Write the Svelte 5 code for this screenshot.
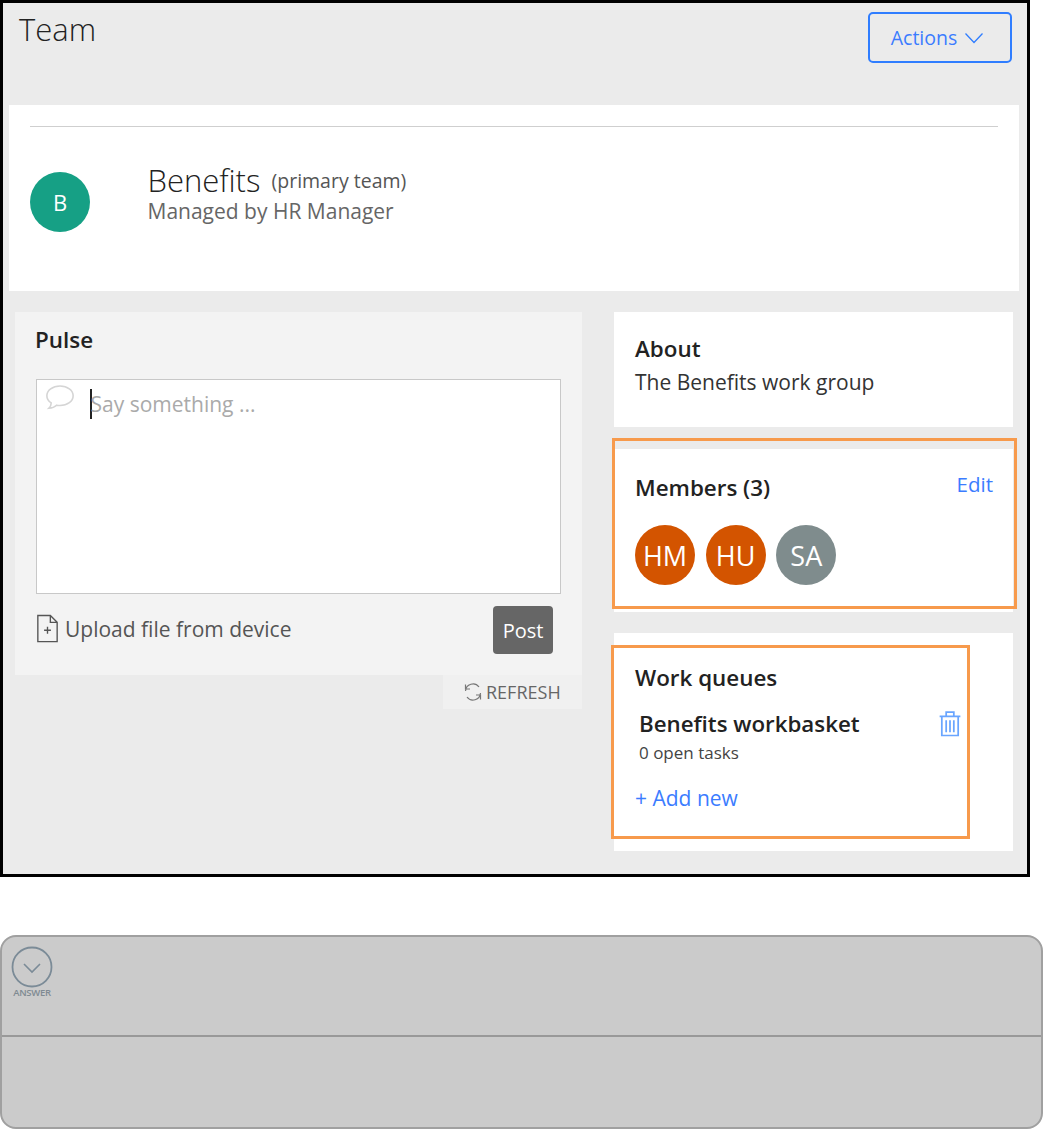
<script lang="ts">
    const members = [
        { initials: 'HM', color: '#d35400' },
        { initials: 'HU', color: '#d35400' },
        { initials: 'SA', color: '#7f8c8d' }
    ];
</script>

<div class="frame">
    <header class="top">
        <h1>Team</h1>
        <button class="actions">
            Actions
            <svg width="20" height="12" viewBox="0 0 20 12"><path d="M1.5 1.5 L10 10.5 L18.5 1.5" fill="none" stroke="#2f7dff" stroke-width="1.3" /></svg>
        </button>
    </header>

    <section class="team-card">
        <hr />
        <div class="team-row">
            <div class="avatar-b">B</div>
            <div class="team-text">
                <div class="team-name">Benefits <span>(primary team)</span></div>
                <div class="managed">Managed by HR Manager</div>
            </div>
        </div>
    </section>

    <div class="columns">
        <div class="left">
            <section class="pulse">
                <h2>Pulse</h2>
                <div class="input">
                    <svg class="bubble" width="32" height="30" viewBox="0 0 28 26">
                        <path d="M14 2.5 C7.5 2.5 2.5 6.2 2.5 11 C2.5 13.6 4 15.8 6.3 17.3 C6.3 19.2 5.4 20.8 4.2 22 C7 21.8 9.4 20.9 11 19.3 C12 19.5 13 19.6 14 19.6 C20.5 19.6 25.5 15.8 25.5 11 C25.5 6.2 20.5 2.5 14 2.5 Z" fill="none" stroke="#d5d5d5" stroke-width="1.4" />
                    </svg>
                    <span class="caret"></span>
                    <span class="placeholder">Say something ...</span>
                </div>
                <div class="pulse-foot">
                    <div class="upload">
                        <svg width="25" height="32" viewBox="0 0 22 28">
                            <path d="M2.5 3 H13.5 L19.5 9 V26 H2.5 Z M13.5 3 V9 H19.5" fill="none" stroke="#555" stroke-width="1.2" />
                            <path d="M8 16 H14 M11 13 V19" fill="none" stroke="#555" stroke-width="1.2" />
                        </svg>
                        <span>Upload file from device</span>
                    </div>
                    <button class="post">Post</button>
                </div>
            </section>
            <div class="refresh">
                <svg width="20" height="20" viewBox="0 0 20 20">
                    <path d="M2.5 9 A7.5 7.5 0 0 1 16 5 M17.5 11 A7.5 7.5 0 0 1 4 15" fill="none" stroke="#777" stroke-width="1.2" />
                    <path d="M2.5 2.5 V7 H7 M17.5 17.5 V13 H13" fill="none" stroke="#777" stroke-width="1.2" />
                </svg>
                <span>REFRESH</span>
            </div>
        </div>

        <div class="right">
            <section class="about">
                <h2>About</h2>
                <p>The Benefits work group</p>
            </section>

            <section class="members">
                <div class="members-head">
                    <h2>Members (3)</h2>
                    <span class="link">Edit</span>
                </div>
                <div class="member-list">
                    {#each members as m}
                        <div class="member" style="background: {m.color}">{m.initials}</div>
                    {/each}
                </div>
                <div class="mark mark-members"></div>
            </section>

            <section class="queues">
                <h2>Work queues</h2>
                <div class="queue">
                    <div>
                        <div class="queue-name">Benefits workbasket</div>
                        <div class="queue-sub">0 open tasks</div>
                    </div>
                    <svg class="trash" width="24" height="29" viewBox="0 0 22 26">
                        <path d="M1.5 6.5 H20.5 M7.5 6 V2.5 H14.5 V6 M3.5 6.5 V24 H18.5 V6.5 M7.5 10 V21 M11 10 V21 M14.5 10 V21" fill="none" stroke="#69a5ff" stroke-width="1.6" />
                    </svg>
                </div>
                <span class="link add">+ Add new</span>
                <div class="mark mark-queues"></div>
            </section>
        </div>
    </div>
</div>

<div class="answer">
    <div class="answer-top">
        <div class="toggle">
            <svg width="42" height="42" viewBox="0 0 42 42">
                <circle cx="21" cy="21" r="19.5" fill="none" stroke="#7b8b97" stroke-width="1.8" />
                <path d="M13 18 L21 26 L29 18" fill="none" stroke="#7b8b97" stroke-width="1.6" />
            </svg>
            <span>ANSWER</span>
        </div>
    </div>
    <div class="answer-bottom"></div>
</div>

<style>
    :global(body) {
        margin: 0;
        background: #fff;
        font-family: "Open Sans", sans-serif;
        color: #333;
    }

    h1, h2, p {
        margin: 0;
    }

    button {
        font-family: inherit;
        cursor: pointer;
    }

    .frame {
        box-sizing: border-box;
        width: 1030px;
        height: 877px;
        border: 3px solid #000;
        background: #ebebeb;
    }

    .top {
        display: flex;
        justify-content: space-between;
        align-items: flex-start;
        height: 102px;
        padding: 8px 15px 0 16px;
        box-sizing: border-box;
    }

    h1 {
        font-size: 31px;
        font-weight: 300;
        line-height: 36px;
        color: #222;
    }

    .actions {
        display: flex;
        align-items: center;
        justify-content: center;
        gap: 7px;
        box-sizing: border-box;
        width: 144px;
        height: 51px;
        margin-top: 1px;
        background: transparent;
        border: 2px solid #2f7dff;
        border-radius: 5px;
        color: #3b7cff;
        font-size: 19.5px;
        padding: 0 5px 0 0;
    }

    .team-card {
        box-sizing: border-box;
        height: 186px;
        margin: 0 8px 0 6px;
        padding: 21px 21px 0;
        background: #fff;
    }

    hr {
        margin: 0;
        border: 0;
        border-top: 1px solid #cfcfcf;
    }

    .team-row {
        display: flex;
        align-items: center;
        margin-top: 30px;
    }

    .avatar-b {
        width: 60px;
        height: 60px;
        border-radius: 50%;
        background: #16a085;
        color: #fff;
        font-size: 22px;
        display: flex;
        align-items: center;
        justify-content: center;
        margin-top: 15px;
    }

    .team-text {
        margin: 1px 0 0 57.5px;
    }

    .team-name {
        font-size: 31px;
        font-weight: 300;
        line-height: 26px;
        color: #222;
    }

    .team-name span {
        font-size: 19.5px;
        font-weight: 400;
        color: #555;
        margin-left: 3px;
        position: relative;
        top: -4px;
    }

    .managed {
        font-size: 21px;
        line-height: 26px;
        color: #666;
    }

    .columns {
        display: grid;
        grid-template-columns: 567px 399px;
        column-gap: 32px;
        padding: 21px 0 0 12px;
    }

    h2 {
        font-size: 22.4px;
        font-weight: 600;
        line-height: 28px;
        color: #222;
    }

    .pulse {
        box-sizing: border-box;
        height: 363px;
        padding: 14px 21px 0;
        background: #f3f3f3;
    }

    .pulse h2 {
        margin-left: -1px;
    }

    .input {
        position: relative;
        box-sizing: border-box;
        height: 215px;
        margin-top: 25px;
        background: #fff;
        border: 1px solid #c8c8c8;
        display: flex;
        padding: 9px 0 0 53px;
    }

    .bubble {
        position: absolute;
        left: 7px;
        top: 3px;
    }

    .caret {
        width: 1.5px;
        height: 30px;
        background: #222;
    }

    .placeholder {
        font-size: 21px;
        line-height: 27px;
        color: #aaa;
        margin: 2px 0 0 -1px;
    }

    .pulse-foot {
        display: flex;
        justify-content: space-between;
        align-items: flex-start;
        padding: 12px 8px 0 0;
    }

    .upload {
        display: flex;
        align-items: flex-start;
        gap: 5px;
        font-size: 21px;
        color: #555;
        margin: 6px 0 0 -1px;
    }

    .upload span {
        padding-top: 3px;
    }

    .post {
        width: 60px;
        height: 48px;
        background: #666;
        color: #fff;
        border: 0;
        border-radius: 4px;
        font-size: 20px;
        padding: 0;
    }

    .refresh {
        box-sizing: border-box;
        height: 34px;
        width: 139px;
        margin-left: auto;
        background: #f0f0f0;
        display: flex;
        align-items: center;
        gap: 3px;
        padding-left: 20px;
        font-size: 18px;
        color: #666;
    }

    .right {
        display: flex;
        flex-direction: column;
    }

    .about {
        box-sizing: border-box;
        height: 115px;
        padding: 23px 21px 0;
        background: #fff;
    }

    .about p {
        font-size: 21px;
        line-height: 27px;
        color: #333;
        margin-top: 6px;
    }

    .members {
        position: relative;
        box-sizing: border-box;
        height: 163px;
        margin-top: 22px;
        padding: 25px 20px 0 21px;
        background: #fff;
    }

    .members-head {
        display: flex;
        justify-content: space-between;
    }

    .link {
        color: #3b7cff;
        font-size: 20.5px;
        line-height: 20px;
    }

    .member-list {
        display: flex;
        gap: 10.67px;
        margin-top: 23px;
    }

    .member {
        width: 60px;
        height: 60px;
        border-radius: 50%;
        color: #fff;
        font-size: 27px;
        display: flex;
        align-items: center;
        justify-content: center;
    }

    .queues {
        position: relative;
        box-sizing: border-box;
        height: 218px;
        margin-top: 21px;
        padding: 31px 21px 0;
        background: #fff;
    }

    .queue {
        display: flex;
        justify-content: space-between;
        width: 327px;
        margin-top: 17px;
        padding-left: 4px;
        box-sizing: border-box;
    }

    .queue-name {
        font-size: 22.3px;
        font-weight: 600;
        line-height: 30px;
        color: #222;
    }

    .queue-sub {
        font-size: 17px;
        line-height: 24px;
        color: #444;
        margin-top: 2px;
    }

    .add {
        display: block;
        margin-top: 20px;
        line-height: 27px;
        font-size: 21px;
    }

    /* orange callouts drawn over the cards */
    .mark {
        position: absolute;
        box-sizing: border-box;
        border: 3px solid #f79a4c;
        pointer-events: none;
    }

    .mark-members {
        left: -2px;
        top: -11px;
        width: 405px;
        height: 171px;
    }

    .mark-queues {
        left: -3px;
        top: 12px;
        width: 359px;
        height: 194px;
    }

    .answer {
        box-sizing: border-box;
        width: 1043px;
        height: 194px;
        margin-top: 58px;
        border: 2px solid #a0a0a0;
        border-radius: 16px;
        background: #cbcbcb;
        overflow: hidden;
    }

    .answer-top {
        box-sizing: border-box;
        height: 100px;
        border-bottom: 2px solid #999;
        padding: 9px 0 0 9px;
    }

    .toggle {
        display: inline-flex;
        flex-direction: column;
        align-items: center;
        width: 42px;
    }

    .toggle svg {
        display: block;
    }

    .toggle span {
        font-size: 9.5px;
        line-height: 10px;
        font-weight: 600;
        color: #7f8a92;
        letter-spacing: -0.3px;
    }
</style>
